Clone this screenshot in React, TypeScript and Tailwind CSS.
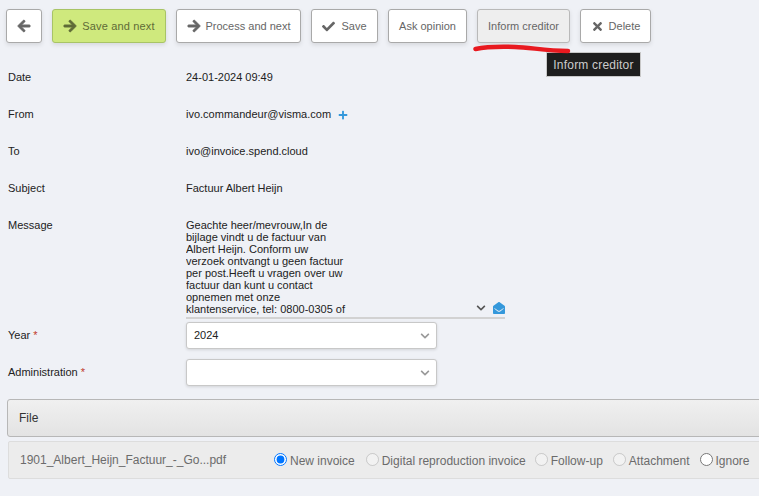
import { FaArrowLeft, FaArrowRight, FaCheck, FaTimes, FaPlus, FaChevronDown, FaEnvelopeOpen } from 'react-icons/fa';
import type { ReactNode } from 'react';

function ToolButton({ className, tone, children }: { className?: string; tone?: string; children: ReactNode }) {
  return (
    <button className={`flex items-center justify-center h-[34px] rounded-[3px] border text-[11px] shadow-[0_2px_4px_rgba(0,0,0,0.1)] ${tone ?? 'bg-white border-[#a9a9a9] text-[#666]'} ${className ?? ''}`}>
      {children}
    </button>
  );
}

function Row({ label, children, className }: { label: ReactNode; children: ReactNode; className?: string }) {
  return (
    <div className={`flex items-center text-[11px] text-[#222] ${className ?? 'h-[37px]'}`}>
      <div className="w-[178px] shrink-0">{label}</div>
      {children}
    </div>
  );
}

function SelectBox({ value }: { value?: string }) {
  return (
    <div className="flex items-center justify-between w-[251px] h-[27px] pl-[7px] pr-[6px] bg-white border border-[#c8c8c8] rounded-[3px] text-[11px] text-[#222] shadow-[0_1px_3px_rgba(0,0,0,0.12)]">
      <span>{value}</span>
      <FaChevronDown className="text-[#999] text-[10px]" />
    </div>
  );
}

function Radio({ label, checked, disabled, className }: { label: string; checked?: boolean; disabled?: boolean; className?: string }) {
  return (
    <label className={`flex items-center ${className ?? ''}`}>
      <input type="radio" name="kind" defaultChecked={checked} disabled={disabled} className="w-[13px] h-[13px] m-0 mr-[3px] mb-[2px]" />
      <span className="mt-[1px]">{label}</span>
    </label>
  );
}

export default function App() {
  return (
    <div className="relative w-[759px] h-[496px] overflow-hidden bg-[#eff1f6] font-['Liberation_Sans',Arial,sans-serif]">
      {/* Toolbar */}
      <div className="flex items-center gap-[10px] pt-[9px] pl-[6px]">
        <ToolButton className="w-[36px]">
          <FaArrowLeft className="text-[14px]" stroke="currentColor" strokeWidth={30} />
        </ToolButton>
        <ToolButton className="w-[114px] gap-[5px] tracking-[0.15px]" tone="bg-[#cfe97d] border-[#a8c466] text-[#5f6b37]">
          <FaArrowRight className="text-[14px]" stroke="currentColor" strokeWidth={30} />
          Save and next
        </ToolButton>
        <ToolButton className="w-[125px] gap-[5px]">
          <FaArrowRight className="text-[14px]" stroke="currentColor" strokeWidth={30} />
          Process and next
        </ToolButton>
        <ToolButton className="w-[67px] gap-[6px]">
          <FaCheck className="text-[13px]" />
          Save
        </ToolButton>
        <ToolButton className="w-[79px]">Ask opinion</ToolButton>
        <ToolButton className="w-[93px]" tone="bg-[#eeeeee] border-[#b9b9b9] text-[#666]">Inform creditor</ToolButton>
        <ToolButton className="w-[71px] gap-[5px]">
          <FaTimes className="text-[13px]" />
          Delete
        </ToolButton>
      </div>

      {/* Form */}
      <div className="pl-[8px] pt-[16px]">
        <Row label="Date">24-01-2024 09:49</Row>
        <Row label="From">
          ivo.commandeur@visma.com
          <FaPlus className="ml-[7px] text-[#3498db] text-[10px]" />
        </Row>
        <Row label="To">ivo@invoice.spend.cloud</Row>
        <Row label="Subject">Factuur Albert Heijn</Row>

        {/* Message */}
        <div className="flex text-[11px] text-[#222]">
          <div className="w-[178px] shrink-0 pt-[10px]">Message</div>
          <div className="relative w-[319px] h-[112px] overflow-hidden border-b-2 border-[#d2d2d2]">
            <p className="w-[160px] pt-[12px] leading-[12px]">
              Geachte heer/mevrouw,In de bijlage vindt u de factuur van Albert Heijn. Conform uw verzoek ontvangt u geen factuur per post.Heeft u vragen over uw factuur dan kunt u contact opnemen met onze klantenservice, tel: 0800-0305 of per mail: helpdesk@ahold.nl
            </p>
            <div className="absolute right-[0px] bottom-[3px] flex items-center gap-[7px]">
              <FaChevronDown className="text-[#555] text-[10px]" />
              <FaEnvelopeOpen className="text-[#3498db] text-[12px]" />
            </div>
          </div>
        </div>

        <Row label={<>Year <span className="text-[#c0392b]">*</span></>} className="h-[33px]">
          <SelectBox value="2024" />
        </Row>
        <Row label={<>Administration <span className="text-[#c0392b]">*</span></>} className="h-[37px] mt-[2px]">
          <SelectBox />
        </Row>
      </div>

      {/* File panel */}
      <div className="ml-[7px] mt-[8px] w-[800px] h-[38px] flex items-center pl-[11px] rounded-l-[3px] border border-[#b7b7b7] bg-gradient-to-b from-[#f0f0f0] to-[#e3e3e3] text-[12px] text-[#333]">
        File
      </div>
      <div className="ml-[8px] mt-[4px] w-[800px] h-[38px] flex items-center pl-[11px] rounded-l-[2px] border border-[#dddddd] bg-[#ececec] text-[12px] text-[#6b6b6b]">
        <span className="w-[254px] shrink-0">1901_Albert_Heijn_Factuur_-_Go...pdf</span>
        <Radio label="New invoice" checked className="mr-[11px]" />
        <Radio label="Digital reproduction invoice" disabled className="mr-[9px]" />
        <Radio label="Follow-up" disabled className="mr-[10px]" />
        <Radio label="Attachment" disabled className="mr-[10px]" />
        <Radio label="Ignore" />
      </div>

      {/* Tooltip */}
      <div className="absolute left-[546px] top-[52px] flex items-center justify-center w-[95px] h-[25px] bg-[#1e1e1e] border border-[#c8c8c8] text-[12px] tracking-[0.2px] text-[#cccccc]">
        Inform creditor
      </div>

      {/* Red marker annotation */}
      <svg className="absolute left-[470px] top-[40px]" width="104" height="16" viewBox="0 0 104 16" fill="none">
        <path d="M5.5 9 C 15 7, 30 6.5, 45 7 S 75 10.5, 98 11" stroke="#e8191f" strokeWidth="4.5" strokeLinecap="round" />
      </svg>
    </div>
  );
}
